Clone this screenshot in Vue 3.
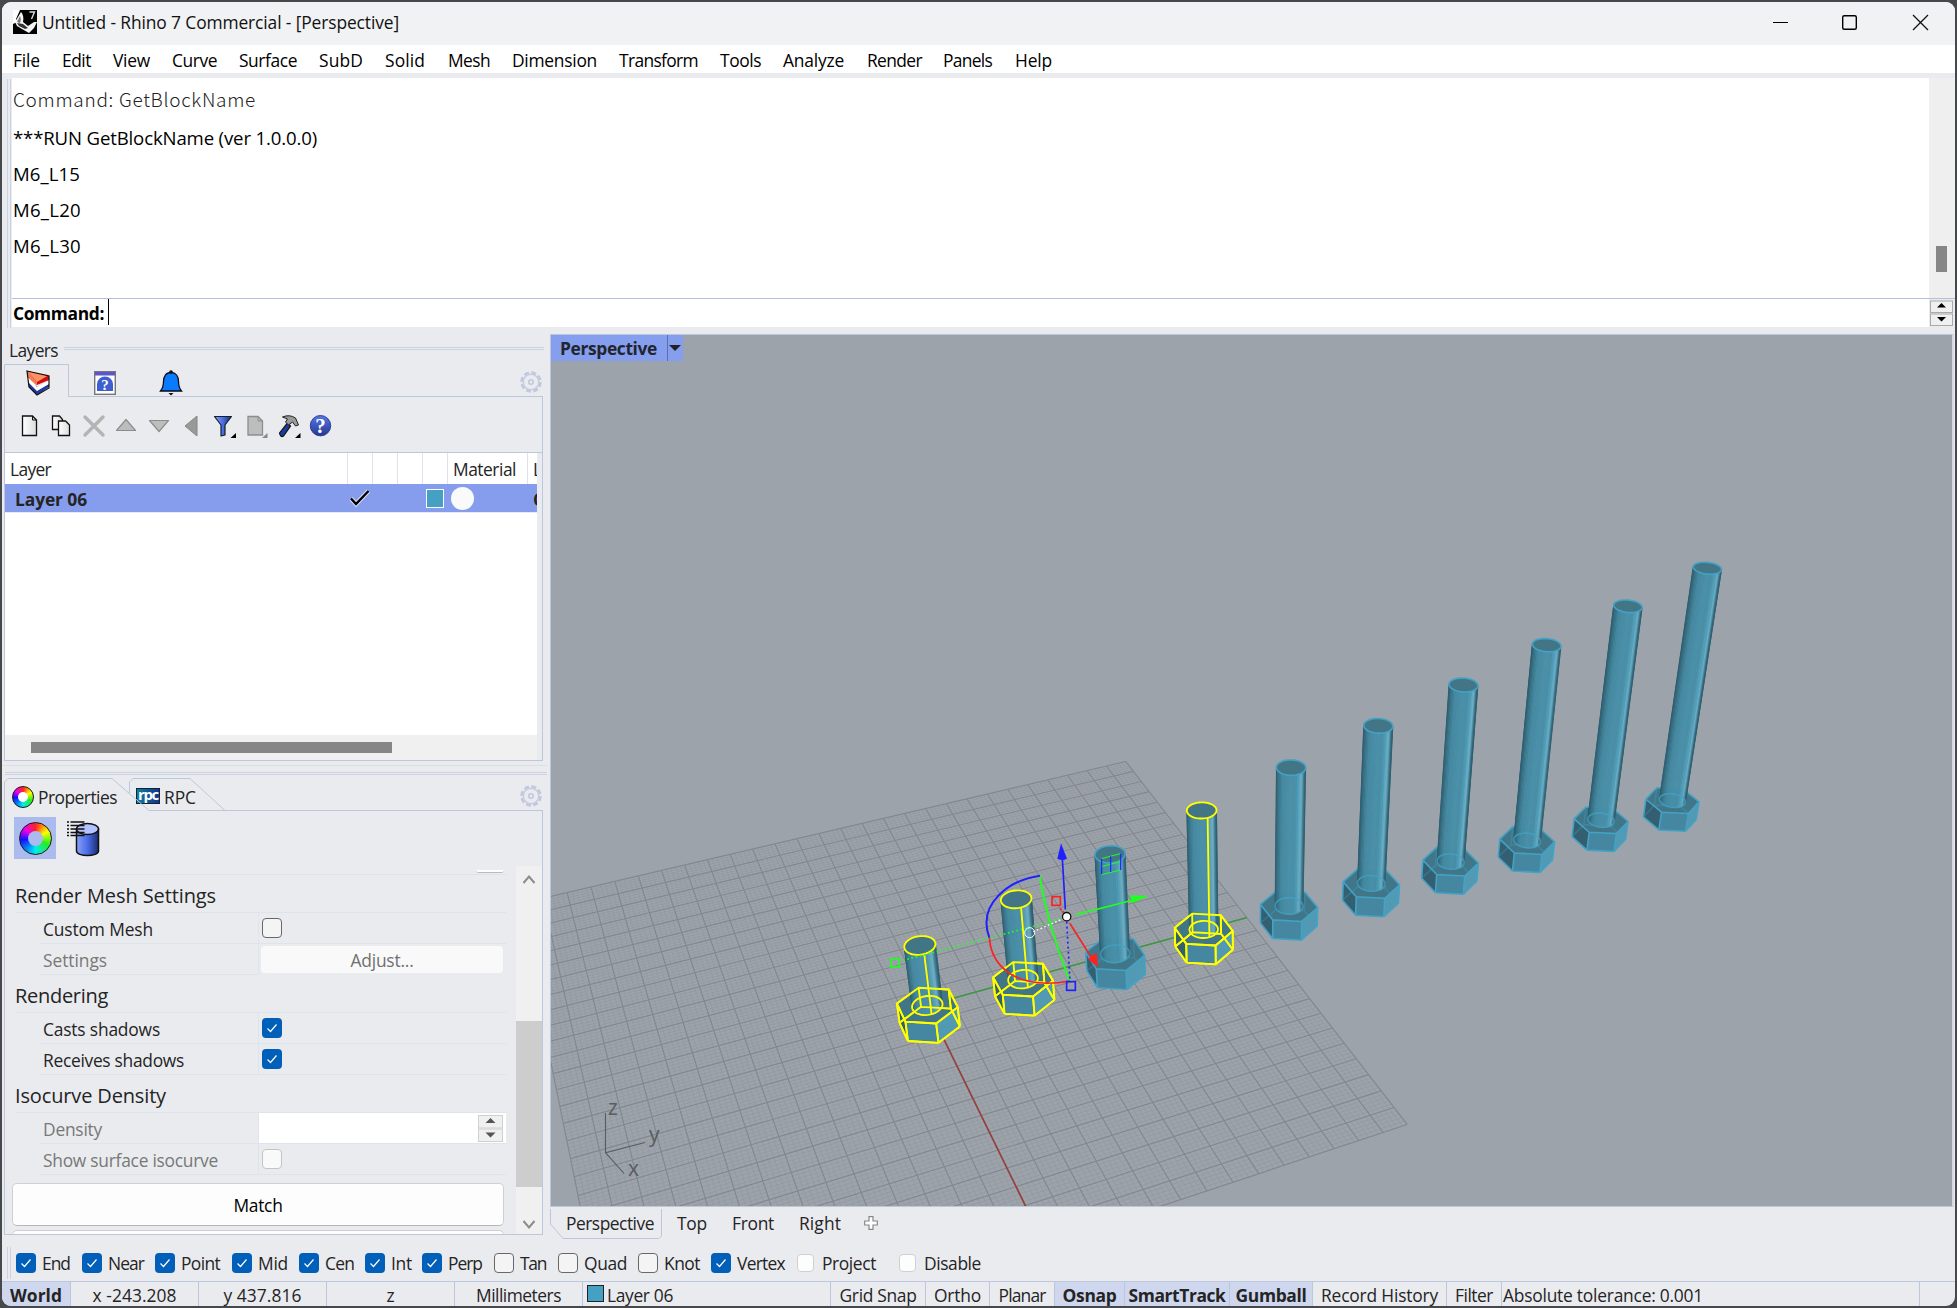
<script setup>
// Stretches or tightens the letter spacing so a label takes the given width in px
const vFit = {
  mounted(el, { value }) {
    const n = el.textContent.length
    const natural = el.getBoundingClientRect().width
    el.style.letterSpacing = (value - natural) / n + 'px'
  },
}

const menus = [
  ['File', 27, 49], ['Edit', 29, 51], ['View', 37, 59], ['Curve', 45, 67], ['Surface', 58, 80],
  ['SubD', 44, 66], ['Solid', 40, 63], ['Mesh', 42, 64], ['Dimension', 85, 107], ['Transform', 79, 101],
  ['Tools', 41, 63], ['Analyze', 61, 84], ['Render', 55, 76], ['Panels', 49, 72], ['Help', 37, 60],
]

const history = [
  ['Command: GetBlockName', 243, 37, true],
  ['***RUN GetBlockName (ver 1.0.0.0)', 304, 36, false],
  ['M6_L15', 67, 36, false],
  ['M6_L20', 68, 36, false],
  ['M6_L30', 68, 36, false],
]

// label, cell width, checkbox state, text width
const snaps = [
  ['End', 66, 'on', 28], ['Near', 73, 'on', 36], ['Point', 77, 'on', 39], ['Mid', 67, 'on', 30],
  ['Cen', 66, 'on', 29], ['Int', 57, 'on', 21], ['Perp', 72, 'on', 34], ['Tan', 64, 'off', 26],
  ['Quad', 80, 'off', 43], ['Knot', 73, 'off', 36], ['Vertex', 86, 'on', 48],
  ['Project', 102, 'dim', 54], ['Disable', 90, 'dim', 57],
]

// label, cell width, text width, kind
const status = [
  ['World', 69, 52, 'active'], ['x -243.208', 128, 84, ''], ['y 437.816', 128, 78, ''], ['z', 128, 8, ''],
  ['Millimeters', 128, 85, ''], ['Layer 06', 248, 66, 'layer'], ['Grid Snap', 95, 77, ''],
  ['Ortho', 64, 47, ''], ['Planar', 65, 47, ''], ['Osnap', 70, 54, 'active'], ['SmartTrack', 105, 97, 'active'],
  ['Gumball', 83, 71, 'active'], ['Record History', 134, 117, ''], ['Filter', 55, 38, ''],
  ['Absolute tolerance: 0.001', 418, 200, 'left'],
]

const views = [['Perspective', 88, 111], ['Top', 30, 55], ['Front', 42, 67], ['Right', 42, 65]]

// World (mm) to screen
function project(x, y, z) {
  const w = 1 - 0.002142 * x + 0.000997 * y - 0.0015 * z
  return [
    (927.3 - 0.5629 * x + 5.807 * y - 1.875 * z) / w,
    (1005.4 + 0.7529 * x - 0.34 * y - 5.42 * z) / w,
  ]
}
const fmt = (p) => p[0].toFixed(2) + ' ' + p[1].toFixed(2)
const seg = (a, b) => 'M' + fmt(project(...a)) + 'L' + fmt(project(...b))
const poly = (pts) => pts.map(fmt).join(' ')

let minor = ''
let major = ''
for (let i = -70; i <= 70; i++) {
  const d = seg([i, -70, 0], [i, 70, 0]) + seg([-70, i, 0], [70, i, 0])
  if (i % 5 === 0) major += d
  else minor += d
}
const axisX = seg([0, 0, 0], [70, 0, 0])
const axisY = seg([0, 0, 0], [0, 70, 0])

// Shank colours from the left silhouette to the right one
const ramp = [
  [0, 44, 92, 110], [0.08, 54, 112, 132], [0.22, 68, 137, 161], [0.5, 73, 144, 169], [0.68, 72, 142, 166],
  [0.8, 92, 163, 187], [0.88, 112, 176, 199], [0.93, 68, 130, 151], [1, 46, 94, 111],
]
function shade(t) {
  for (let i = 1; i < ramp.length; i++) {
    if (t <= ramp[i][0]) {
      const a = ramp[i - 1]
      const b = ramp[i]
      const k = (t - a[0]) / (b[0] - a[0])
      return `rgb(${[1, 2, 3].map((j) => Math.round(a[j] + (b[j] - a[j]) * k)).join(',')})`
    }
  }
  return 'rgb(46,94,111)'
}

function makeBolt(index) {
  const y0 = index * 20
  const len = 15 + index * 5
  const selected = [0, 1, 3].includes(index)
  const circle = (z) => Array.from({ length: 48 }, (_, i) => {
    const a = (i / 48) * Math.PI * 2
    return project(3 * Math.cos(a), y0 + 3 * Math.sin(a), z)
  })
  const hex = (z) => Array.from({ length: 6 }, (_, i) => {
    const a = (i / 6) * Math.PI * 2
    return project(6.15 * Math.cos(a), y0 + 6.15 * Math.sin(a), z)
  })
  const top = circle(len)
  const base = circle(0)
  const hi = hex(0)
  const lo = hex(-4.95)
  const minX = Math.min(...base.map((p) => p[0]))
  const maxX = Math.max(...base.map((p) => p[0]))
  const strips = []
  for (let i = 0; i < 48; i++) {
    const j = (i + 1) % 48
    const ux = base[j][0] - base[i][0]
    const uy = base[j][1] - base[i][1]
    const vx = top[i][0] - base[i][0]
    const vy = top[i][1] - base[i][1]
    if (ux * vy - uy * vx < 0) {
      const t = ((base[i][0] + base[j][0]) / 2 - minX) / (maxX - minX)
      strips.push({ pts: poly([base[i], base[j], top[j], top[i]]), fill: shade(t) })
    }
  }
  const face = (i) => {
    const j = (i + 1) % 6
    return poly([hi[i], hi[j], lo[j], lo[i]])
  }
  let hidden = ''
  let front = 'M' + hi.map(fmt).join('L') + 'Z'
  for (let i = 0; i < 6; i++) {
    const j = (i + 1) % 6
    const under = 'M' + fmt(lo[i]) + 'L' + fmt(lo[j])
    if ([0, 4, 5].includes(i)) front += under
    else hidden += under
    const up = 'M' + fmt(hi[i]) + 'L' + fmt(lo[i])
    if ([0, 1, 4, 5].includes(i)) front += up
    else hidden += up
  }
  return {
    selected, strips, hidden, front,
    cap: poly(hi), left: face(4), mid: face(5), right: face(0),
    top: poly(top), ring: poly(base), seam: 'M' + fmt(base[0]) + 'L' + fmt(top[0]),
  }
}
// Far bolts first
const bolts = Array.from({ length: 10 }, (_, i) => makeBolt(9 - i))
</script>

<template>
  <div class="desk">
    <div class="window">
      <header class="titlebar">
        <svg class="logo" viewBox="0 0 24 24">
          <rect width="24" height="24" fill="#000" />
          <path d="M0 0h7l-4 9 1 3-4 2z" fill="#fff" />
          <path d="M8 2c2 2 3 6 2 10l5 4 6-4 3 0-3 6-5 5-7-4-5-3-2-4 3-5z" fill="#f4f4f4" />
          <path d="M4 13l6 1 5 4-3 1-6-3z" fill="#333" />
          <path d="M7 6c1 3 1 5 0 7l-3-1z" fill="#777" />
          <path d="M16.500 2h5l-3 7" fill="none" stroke="#ddd" stroke-width="1.400" />
        </svg>
        <span v-fit="357" class="caption">Untitled - Rhino 7 Commercial - [Perspective]</span>
        <svg class="winbtns" viewBox="0 0 160 20">
          <path d="M1 9.500h15" stroke="#000" stroke-width="1.200" />
          <rect x="70.700" y="2.700" width="13.600" height="13.600" rx="1.500" fill="none" stroke="#000" stroke-width="1.400" />
          <path d="M141 2l15 15M156 2l-15 15" stroke="#111" stroke-width="1.300" />
        </svg>
      </header>

      <nav class="menubar">
        <span v-for="m in menus" :key="m[0]" class="menu" :style="{ width: m[2] + 'px' }"><span v-fit="m[1]">{{ m[0] }}</span></span>
      </nav>

      <section class="command">
        <div class="grip"></div>
        <div class="console">
          <div class="history">
            <div v-for="h in history" :key="h[0]" class="line" :class="{ thin: h[3] }" :style="{ height: h[2] + 'px' }"><span v-fit="h[1]">{{ h[0] }}</span></div>
          </div>
          <div class="prompt"><b v-fit="91">Command:</b><i class="caret"></i></div>
        </div>
        <div class="side">
          <div class="vscroll"><div class="vthumb"></div></div>
          <div class="spin">
            <svg viewBox="0 0 23 26">
              <rect x="0.500" y="1" width="22" height="11.500" fill="#f0f0f0" stroke="#aaa" />
              <rect x="0.500" y="14" width="22" height="11.500" fill="#f0f0f0" stroke="#aaa" />
              <path d="M7 7.500h9l-4.500-4.500zM7 17h9l-4.500 4.500z" fill="#000" />
            </svg>
          </div>
        </div>
      </section>

      <main class="work">
        <aside class="left">
          <div class="ptitle"><span v-fit="49">Layers</span><div class="dbl"></div></div>
          <div class="tabs">
            <svg class="tabline" viewBox="0 0 548 36">
              <path d="M2.500 36V.500H66.500V32.500H541" fill="none" stroke="#bcc7dd" />
            </svg>
            <svg class="ticon a" viewBox="0 0 24 26">
              <path d="M1 1L12 13V25L3 17Z" fill="#fff" /><path d="M12 17L23 12V17L11 25L3 17L2 12Z" fill="#203a9c" />
              <path d="M1.500 8L11 17L23 11V14L11 21L2 12Z" fill="#fff" />
              <path d="M1 1L23 6V10L11 15L1 6Z" fill="#d40c0c" /><path d="M1 1L23 5L11 12Z" fill="#ff9166" /><path d="M1 1L11 12V16L1.500 7Z" fill="#f47f57" />
              <path d="M1 1L23 6V18L11 25L3 17Z" fill="none" stroke="#111" stroke-width="1.200" />
            </svg>
            <svg class="ticon b" viewBox="0 0 22 24">
              <rect x=".7" y=".7" width="20.600" height="22.600" fill="#fff" stroke="#777" stroke-width="1.400" />
              <rect x="1" y="1" width="20" height="3.500" fill="#5d55c8" />
              <path d="M3 20V13a8 7.500 0 0 1 16 0v7z" fill="#3f5fd0" />
              <text x="11" y="19" text-anchor="middle" class="q">?</text>
            </svg>
            <svg class="ticon c" viewBox="0 0 24 26">
              <path d="M12 2.500c5 0 7.500 4 7.500 9 0 5 1 7 3 9.500h-21c2-2.500 3-4.500 3-9.500 0-5 2.500-9 7.500-9z" fill="#0a7bff" stroke="#0b0b1a" stroke-width="1.300" />
              <circle cx="12" cy="2" r="1.800" fill="#111" /><path d="M9.500 23h5l-2.500 2.500z" fill="#111" />
            </svg>
            <svg class="gear" viewBox="-12 -12 24 24"><circle r="9.500" fill="none" stroke="#bfc8dc" stroke-width="2.500" stroke-dasharray="5 2.460" /><circle r="7.800" fill="none" stroke="#c3cce0" stroke-width="1.500" /><circle r="2.300" fill="none" stroke="#bfc8dc" stroke-width="1.500" /></svg>
          </div>
          <div class="box layers">
            <div class="toolbar">
              <svg viewBox="0 0 330 26">
                <defs>
                  <linearGradient id="pg" x1="0" x2="1"><stop offset="0" stop-color="#fff" /><stop offset="1" stop-color="#dcdcdc" /></linearGradient>
                  <linearGradient id="bl" x1="0" x2="1"><stop offset="0" stop-color="#8aa2f5" /><stop offset=".5" stop-color="#4a6ce8" /><stop offset="1" stop-color="#1a2b70" /></linearGradient>
                  <linearGradient id="bq" x1="0" x2="0" y1="0" y2="1"><stop offset="0" stop-color="#5577e8" /><stop offset="1" stop-color="#26388f" /></linearGradient>
                </defs>
                <path d="M7.500 3h10l4 4v15.500h-14z" fill="url(#pg)" stroke="#111" stroke-width="1.300" /><path d="M17.500 3v4h4" fill="none" stroke="#111" />
                <path d="M37.500 3h7l3 3.500v10h-10z" fill="url(#pg)" stroke="#111" stroke-width="1.300" />
                <path d="M43.500 8h7l4 4v10.500h-11z" fill="url(#pg)" stroke="#111" stroke-width="1.300" />
                <path d="M70 4l18 18M88 4l-18 18" stroke="#b4b4b4" stroke-width="3.400" stroke-linecap="round" />
                <g transform="translate(-9.500 0)">
                  <path d="M111 17.500h19l-9.500-11z" fill="#bdbdbd" stroke="#8d8d8d" stroke-width="1.200" stroke-linejoin="round" />
                  <path d="M144 7.500h19l-9.500 11z" fill="#bdbdbd" stroke="#8d8d8d" stroke-width="1.200" stroke-linejoin="round" />
                  <path d="M191.500 3v20l-12-10z" fill="#999" stroke="#858585" stroke-linejoin="round" />
                  <path d="M209 3.500h17l-6.500 8.500v10l-4 1v-11z" fill="url(#bl)" stroke="#122" stroke-width="1.200" stroke-linejoin="round" />
                  <path d="M230.500 20v5h-5.500z" fill="#000" />
                  <path d="M242.500 3.500h10l4.500 4.500v14h-14.500z" fill="#bdbdbd" stroke="#8d8d8d" stroke-width="1.300" /><path d="M252.500 3.500v4.500h4.500" fill="none" stroke="#8d8d8d" />
                  <path d="M262 20v5h-5.500z" fill="#888" />
                  <path d="M274 20l8-10 3 3-7 10q-3 2-4-3z" fill="#1c3c9c" stroke="#111" stroke-width="1.200" />
                  <path d="M277 4q7-3 13 1l3 7-3 1-3-4-4 3-3-3 2-3z" fill="#9a9a9a" stroke="#222" />
                  <path d="M295 20v5h-5.500z" fill="#000" />
                  <circle cx="315" cy="12.700" r="10.200" fill="url(#bq)" stroke="#2b3f96" />
                  <text x="315" y="20" text-anchor="middle" class="qb">?</text>
                </g>
              </svg>
            </div>
            <div class="table">
              <div class="thead">
                <div class="th name"><span v-fit="41">Layer</span></div>
                <div class="th s"></div><div class="th s"></div><div class="th s"></div><div class="th s"></div>
                <div class="th mat"><span v-fit="63">Material</span></div>
                <div class="th last">L</div>
              </div>
              <div class="row">
                <b class="rname"><span v-fit="72">Layer 06</span></b>
                <svg class="check" viewBox="0 0 24 20"><path d="M3 10.500l5 5.500L20.500 3" fill="none" stroke="#fff" stroke-width="4.500" opacity=".7" /><path d="M3 10.500l5 5.500L20.500 3" fill="none" stroke="#000" stroke-width="2.500" /></svg>
                <div class="sw"></div><div class="dot"></div><b class="rlast">C</b>
              </div>
            </div>
            <div class="hscroll"><div class="hthumb"></div></div>
          </div>

          <div class="split"></div>
          <div class="tabs second">
            <svg class="tabline" viewBox="0 0 548 36">
              <path d="M2.500 36V4L6 .500H110L147 32.500H541" fill="none" stroke="#bcc7dd" />
              <path d="M127.500 15.500V4L131 .500H188L223 32.500" fill="none" stroke="#bcc7dd" />
            </svg>
            <div class="ptabs">
              <div class="wheel small"></div><span v-fit="79">Properties</span>
              <div class="rpc"><span v-fit="20">rpc</span></div><span v-fit="32">RPC</span>
            </div>
            <svg class="gear" viewBox="-12 -12 24 24"><circle r="9.500" fill="none" stroke="#bfc8dc" stroke-width="2.500" stroke-dasharray="5 2.460" /><circle r="7.800" fill="none" stroke="#c3cce0" stroke-width="1.500" /><circle r="2.300" fill="none" stroke="#bfc8dc" stroke-width="1.500" /></svg>
          </div>
          <div class="box props">
            <div class="picons">
              <div class="psel"><div class="wheel big"></div></div>
              <svg viewBox="0 0 36 38">
                <path d="M10.500 9v22c0 6 22 6 22 0V9z" fill="url(#bl)" stroke="#111" stroke-width="1.500" />
                <ellipse cx="21.500" cy="9" rx="11" ry="5.500" fill="#b3c3ff" stroke="#111" stroke-width="1.500" />
                <path d="M1 2h2M4.500 2h14M1 5.500h2M4.500 5.500h14M1 9h2M4.500 9h14M1 12.500h2M4.500 12.500h14M1 15.500h2M4.500 15.500h14" stroke="#111" stroke-width="1.500" />
              </svg>
            </div>
            <div class="pbody">
              <div class="plist">
                <div class="cut"><div class="stub"></div></div>
                <div class="ghead"><span v-fit="201">Render Mesh Settings</span></div>
                <div class="prow"><div class="pl"><span v-fit="110">Custom Mesh</span></div><div class="pr"><i class="cb"></i></div></div>
                <div class="prow noline"><div class="pl dim"><span v-fit="64">Settings</span></div><div class="pr"><div class="adjust"><span v-fit="63">Adjust...</span></div></div></div>
                <div class="ghead"><span v-fit="93">Rendering</span></div>
                <div class="prow"><div class="pl"><span v-fit="117">Casts shadows</span></div><div class="pr"><i class="cb on"><svg viewBox="0 0 20 20"><path d="M5.500 10.500l3 3 6-7" /></svg></i></div></div>
                <div class="prow"><div class="pl"><span v-fit="141">Receives shadows</span></div><div class="pr"><i class="cb on"><svg viewBox="0 0 20 20"><path d="M5.500 10.500l3 3 6-7" /></svg></i></div></div>
                <div class="ghead"><span v-fit="151">Isocurve Density</span></div>
                <div class="prow"><div class="pl dim"><span v-fit="59">Density</span></div><div class="pr field">
                  <svg viewBox="0 0 25 27"><rect x=".5" y=".5" width="24" height="12.500" fill="#f0f0f0" stroke="#d0d0d0" /><rect x=".5" y="14" width="24" height="12.500" fill="#f0f0f0" stroke="#d0d0d0" /><path d="M7.500 8h10l-5-5zM7.500 17.500h10l-5 5z" fill="#555" /></svg>
                </div></div>
                <div class="prow"><div class="pl dim"><span v-fit="175">Show surface isocurve</span></div><div class="pr"><i class="cb dis"></i></div></div>
                <div class="match"><span v-fit="49">Match</span></div>
                <div class="match next"></div>
              </div>
              <div class="pscroll">
                <svg viewBox="0 0 26 30"><path d="M7.500 18l5.500-6.500 5.500 6.500" fill="none" stroke="#8b8b8b" stroke-width="2" /></svg>
                <div class="pthumb"></div>
                <svg class="dn" viewBox="0 0 26 30"><path d="M7.500 12l5.500 6.500 5.500-6.500" fill="none" stroke="#8b8b8b" stroke-width="2" /></svg>
              </div>
            </div>
          </div>
        </aside>

        <section class="right">
          <div class="viewport">
            <svg class="scene" viewBox="551 335 1402 871" width="1402" height="871">
              <path :d="minor" fill="none" stroke="#8f959c" stroke-width=".7" opacity=".75" />
              <path :d="major" fill="none" stroke="#83878f" stroke-width="1.150" />
              <path :d="axisX" stroke="#96413f" stroke-width="1.700" />
              <path :d="axisY" stroke="#46964a" stroke-width="1.700" />
              <g v-for="(b, i) in bolts" :key="i" :class="b.selected ? 'sel' : 'plain'" stroke-linejoin="round">
                <polygon :points="b.left" fill="#335f70" />
                <polygon :points="b.right" fill="#529ab4" />
                <polygon :points="b.mid" fill="#4587a0" />
                <polygon :points="b.cap" fill="#407688" />
                <path class="edge back" :d="b.hidden" />
                <path class="edge" :d="b.front" />
                <polygon v-for="(s, k) in b.strips" :key="k" :points="s.pts" :fill="s.fill" :stroke="s.fill" stroke-width=".6" />
                <polygon class="edge base" :points="b.ring" />
                <path v-if="b.selected" class="edge" :d="b.hidden" />
                <path v-if="b.selected" class="edge" :d="b.front" />
                <path class="edge seam" :d="b.seam" />
                <polygon class="edge top" :points="b.top" />
              </g>
              <g transform="translate(860 780) scale(.33333)" fill="none" stroke-width="5">
                <path d="M724 236L781 221M724 260L781 245M724 284L781 270" stroke="#20ff20" stroke-width="3" />
                <path d="M725 236V283M752 229V276M782 221V270" stroke="#2020ff" stroke-width="3.500" />
                <path d="M612 415L122 543" stroke="#20ff20" stroke-dasharray="5 8" />
                <path d="M540 287C545 350 590 510 630 603" stroke="#20ff20" stroke-width="6" />
                <path d="M540 287C450 300 350 370 388 473" stroke="#2020ff" stroke-width="6" />
                <path d="M388 473C394 560 470 632 630 603" stroke="#ff2020" />
                <path d="M612 415L520 455" stroke="#fff" stroke-width="4" stroke-dasharray="5 7" />
                <path d="M620 425L630 603" stroke="#2020ff" stroke-dasharray="6 9" />
                <path d="M612 398L600 385" stroke="#ff2020" stroke-dasharray="6 5" />
                <path d="M616 388L607 235" stroke="#2020ff" /><path d="M603 190L592 236Q607 244 621 236Z" fill="#2020ff" stroke="none" />
                <path d="M648 404L820 360" stroke="#20ff20" /><path d="M865 348L810 346L816 370Z" fill="#20ff20" stroke="none" />
                <path d="M630 430L702 545" stroke="#ff2020" /><path d="M714 562L684 538Q696 524 710 520Z" fill="#ff2020" stroke="none" />
                <rect x="576" y="350" width="25" height="26" stroke="#ff2020" />
                <rect x="92" y="536" width="26" height="25" stroke="#20ff20" />
                <rect x="620" y="605" width="26" height="26" stroke="#2020ff" />
                <circle cx="509" cy="458" r="15" stroke="#fff" stroke-width="3" />
                <circle cx="620" cy="410" r="12.500" fill="#fff" stroke="#111" stroke-width="4" />
              </g>
              <g stroke="#595c60" fill="none" stroke-width="1.100"><path d="M605.500 1113V1152.700L645 1142.500M605.500 1152.700L624 1173.500" /></g>
              <g class="axes"><text x="608" y="1115">z</text><text x="649" y="1142">y</text><text x="628" y="1176">x</text></g>
            </svg>
            <div class="vtitle"><b v-fit="97">Perspective</b><i></i></div>
          </div>
          <div class="vtabs">
            <svg class="vline" viewBox="0 0 120 36"><path d="M.5 2V17L13 31.500H109L111.500 29V2" fill="none" stroke="#bcc7dd" /></svg>
            <span v-for="v in views" :key="v[0]" class="vt" :style="{ width: v[2] + 'px' }"><span v-fit="v[1]">{{ v[0] }}</span></span>
            <svg class="plus" viewBox="0 0 14 14"><path d="M5 .7h4V5h4.300v4H9v4.300H5V9H.7V5H5z" fill="#fff" stroke="#888" stroke-width="1.200" /></svg>
          </div>
        </section>
      </main>

      <section class="osnap">
        <div class="grip low"></div>
        <div v-for="s in snaps" :key="s[0]" class="snap" :class="s[2]" :style="{ width: s[1] + 'px' }">
          <i class="cb" :class="s[2]"><svg v-if="s[2] === 'on'" viewBox="0 0 20 20"><path d="M5.500 10.500l3 3 6-7" /></svg></i>
          <span v-fit="s[3]">{{ s[0] }}</span>
        </div>
      </section>

      <footer class="status">
        <div v-for="s in status" :key="s[0]" class="cell" :class="s[3]" :style="{ width: s[1] + 'px' }">
          <i v-if="s[3] === 'layer'" class="lsw"></i><span v-fit="s[2]">{{ s[0] }}</span>
        </div>
      </footer>
    </div>
  </div>
</template>

<style>
body { margin: 0; background: #444547; overflow: hidden; }
</style>

<style scoped>
* { box-sizing: border-box; }
.desk { width: 1957px; height: 1308px; padding: 2px; background: #47484b; font: 17.4px/24px "Open Sans", "Noto Sans", sans-serif; color: #242424; }
.desk span, .desk b { white-space: nowrap; }
.window { width: 1953px; height: 1304px; background: #eaebef; border-radius: 9px; overflow: hidden; display: flex; flex-direction: column; }
svg { display: block; }

.titlebar { height: 43px; flex: none; background: #f1f2f4; display: flex; align-items: center; padding-left: 11px; color: #111; }
.logo { width: 24px; height: 24px; margin-right: 5px; margin-top: -3px; }
.caption { margin-top: -3px; }
.winbtns { width: 160px; height: 20px; margin-left: auto; margin-right: 23px; margin-top: -1px; }
.menubar { height: 28px; flex: none; background: #fff; display: flex; align-items: center; padding-left: 11px; color: #000; }
.menu { flex: none; padding-top: 1px; }

.command { height: 254px; flex: none; display: flex; padding-top: 5px; }
.grip { width: 4px; margin: 1px 1px 0 5px; border: 1px solid #cbd3e2; border-width: 0 1px; height: 249px; flex: none; }
.console { width: 1918px; margin-right: 0; display: flex; flex-direction: column; }
.history { height: 220px; background: #fff; padding: 5px 0 0 1px; font-size: 18.600px; color: #000; }
.line { display: flex; align-items: center; }
.thin { font-family: "Noto Sans CJK KR", "Noto Sans", sans-serif; font-weight: 300; color: #222; padding-bottom: 5px; font-size: 19px; }
.prompt { height: 29px; border-top: 1px solid #b4c0d6; background: #fff; display: flex; align-items: center; padding: 0 0 1px 1px; color: #000; }
.caret { width: 1px; height: 26px; background: #000; margin: -1px 0 0 4px; }
.side { width: 26px; }
.vscroll { height: 220px; background: #efefef; padding: 168px 0 0 7px; border-left: 0; }
.vthumb { width: 11px; height: 26px; background: #868686; }
.spin { height: 29px; border-top: 1px solid #b4c0d6; padding: 1px; }
.spin svg { width: 23px; height: 26px; }

.work { height: 908px; flex: none; display: flex; }
.left { width: 548px; flex: none; display: flex; flex-direction: column; }
.ptitle { height: 37px; display: flex; align-items: center; padding: 8px 6px 0 7px; gap: 6px; }
.dbl { flex: 1; height: 3px; border: 1px solid #cbd3e2; border-width: 1px 0; margin-top: -3px; }
.tabs { height: 33px; position: relative; display: flex; align-items: center; padding-left: 24px; flex: none; }
.tabline { position: absolute; left: 0; top: 0; width: 548px; height: 36px; z-index: 1; }
.ticon { flex: none; margin-top: 4px; }
.a { width: 24px; height: 26px; }
.b { width: 22px; height: 24px; margin-left: 44px; }
.c { width: 24px; height: 26px; margin-left: 43px; }
.gear { width: 24px; height: 24px; margin-left: auto; margin-right: 7px; margin-top: 2px; }
.q { font: bold 15px "Liberation Serif", serif; fill: #fff; }
.qb { font: bold 21px "Liberation Serif", serif; fill: #fff; }
.box { margin-left: 2px; width: 539px; border: 1px solid #bcc7dd; border-top: 0; flex: none; }
.layers { height: 364px; }
.toolbar { height: 56px; padding: 16px 0 0 10px; border-bottom: 1px solid #bcc7dd; }
.toolbar svg { width: 330px; height: 26px; }
.table { width: 532px; height: 282px; background: #fff; overflow: hidden; }
.thead { height: 31px; display: flex; align-items: stretch; }
.th { flex: none; border-right: 1px solid #dfe2ea; display: flex; align-items: center; padding-top: 1px; }
.name { width: 343px; padding-left: 5px; }
.s { width: 25px; }
.mat { width: 80px; padding-left: 5px; }
.last { width: 10px; padding-left: 5px; overflow: hidden; border: 0; }
.row { height: 29px; background: #869ced; display: flex; align-items: center; border-bottom: 1px solid #e8ebf3; overflow: hidden; }
.rname { width: 343px; padding: 2px 0 0 10px; flex: none; }
.check { width: 24px; height: 20px; flex: none; }
.sw { width: 18px; height: 19px; margin-left: 54px; border: 1px solid #fff; background: #45a1c4; flex: none; }
.dot { width: 23px; height: 23px; border-radius: 50%; background: #fafafa; margin-left: 7px; flex: none; }
.rlast { margin-left: 59px; width: 5px; overflow: hidden; padding-top: 1px; flex: none; }
.hscroll { height: 25px; width: 532px; background: #f0f0f0; padding: 7px 0 0 26px; }
.hthumb { width: 361px; height: 11px; background: #868686; }

.split { height: 17px; flex: none; margin: 0 3px 0 0; border-bottom: 0; background: linear-gradient(#dcdee6, #dcdee6) 0 4px / 100% 1px no-repeat, linear-gradient(#cbd3e2, #cbd3e2) 3px 11px / 100% 1px no-repeat, linear-gradient(#cbd3e2, #cbd3e2) 3px 13px / 100% 1px no-repeat; }
.second { padding-left: 10px; }
.ptabs { display: flex; align-items: center; padding-top: 5px; }
.wheel { border-radius: 50%; border: 1.500px solid #181818; background: conic-gradient(#f22, #ff0 60deg, #2e2 115deg, #0ee 180deg, #11f 265deg, #e0e 310deg, #f22); display: flex; align-items: center; justify-content: center; flex: none; }
.wheel::after { content: ""; border-radius: 50%; }
.small { width: 22px; height: 22px; margin-right: 4px; }
.small::after { width: 10px; height: 10px; background: #fff; }
.big { width: 33px; height: 33px; }
.big::after { width: 15px; height: 15px; background: #abbbee; }
.rpc { width: 24px; height: 16px; margin: -2px 4px 0 19px; border: 1px solid #123; background: linear-gradient(90deg, #0f7f9d, #11358c); color: #fff; font-weight: bold; font-size: 15px; line-height: 10px; padding-left: 1px; }
.props { height: 424px; display: flex; flex-direction: column; }
.picons { height: 55px; display: flex; padding: 6px 0 0 9px; flex: none; }
.psel { width: 42px; height: 42px; background: #abbbee; display: flex; align-items: center; justify-content: center; padding-top: 1px; }
.picons svg { width: 36px; height: 38px; margin: 3px 0 0 10px; }
.pbody { flex: 1; display: flex; min-height: 0; }
.plist { width: 511px; padding: 4px 10px 0 10px; overflow: hidden; }
.cut { height: 5px; margin-left: 24px; border-bottom: 1px solid #dfe4ec; display: flex; justify-content: flex-end; padding-right: 2px; }
.stub { width: 28px; height: 3px; background: #fdfdfd; border-bottom: 1px solid #bbb; border-radius: 0 0 4px 4px; }
.ghead { height: 38px; border-bottom: 1px solid #dfe4ec; font-size: 20px; display: flex; align-items: center; padding: 4px 0 0 0; }
.prow { height: 31px; margin-left: 24px; display: flex; border-bottom: 1px solid #dfe4ec; }
.noline { border-bottom-color: transparent; }
.noline .pl { height: 31px; border-bottom: 1px solid #dfe4ec; }
.pl { width: 220px; flex: none; padding-left: 4px; border-right: 1px solid #dfe4ec; display: flex; align-items: center; padding-top: 2px; }
.dim { color: #787878; }
.pr { flex: 1; padding: 5px 0 0 3px; }
.field { background: #fff; display: flex; justify-content: flex-end; padding: 2px 3px 0 0; }
.field svg { width: 25px; height: 27px; }
.cb { display: block; width: 20px; height: 20px; border: 1.500px solid #686868; border-radius: 4px; background: #f4f4f4; flex: none; }
.cb.on { border: 0; background: #005fb8; }
.cb svg { width: 20px; height: 20px; }
.cb path { fill: none; stroke: #fff; stroke-width: 1.200; }
.cb.dis { border-color: #c4c4c4; background: #f9f9f9; }
.adjust { width: 242px; height: 27px; margin: -3px 0 0 -1px; background: #f9f9f9; border-radius: 4px; display: flex; align-items: center; justify-content: center; color: #707070; padding-top: 1px; }
.match { height: 43px; margin: 8px 2px 0 -3px; border: 1px solid #d0d0d0; border-bottom-color: #b5b5b5; border-radius: 5px; background: #fdfdfd; display: flex; align-items: center; justify-content: center; color: #000; }
.next { margin-top: 4px; }
.pscroll { width: 26px; background: #f0f0f0; display: flex; flex-direction: column; }
.pscroll svg { width: 26px; height: 30px; flex: none; margin-top: -1px; }
.pthumb { height: 166px; flex: none; margin-top: 126px; background: #cdcdcd; }
.pscroll .dn { margin-top: 22px; }

.right { width: 1405px; }
.viewport { position: relative; margin-top: 7px; margin-right: 1px; height: 873px; border: 1px solid #bcc7dd; border-right: 2px solid #d5dae4; background: #9da3aa; }
.scene { width: 1402px; height: 871px; }
.vtitle { position: absolute; left: 0; top: 0; width: 132px; height: 26px; background: #869eee; display: flex; align-items: center; padding-left: 9px; color: #22252e; }
.vtitle i { border: 6px solid transparent; border-top: 6px solid #222; border-bottom: 0; margin-left: 12px; position: relative; }
.vtitle i::before { content: ""; position: absolute; left: -8px; top: -16px; width: 1px; height: 26px; background: #5c6cae; }
.axes { font: 21px "Open Sans", sans-serif; fill: #595c60; }
.edge { fill: none; stroke: #43a2c5; stroke-width: 1.600; }
.back { opacity: .3; }
.base { opacity: .75; }
.seam { opacity: .6; stroke-width: 1.300; }
.top { fill: #427687; }
.sel .edge { stroke: #ff0; opacity: 1; stroke-width: 1.850; }
.vtabs { height: 28px; position: relative; display: flex; align-items: center; padding: 4px 0 0 16px; }
.vline { position: absolute; left: 0; top: 0; width: 120px; height: 36px; z-index: 1; }
.vt { flex: none; }
.plus { width: 14px; height: 14px; }

.osnap { height: 46px; flex: none; display: flex; align-items: center; padding-top: 10px; }
.low { height: 32px; margin: -1px 5px 0 5px; }
.snap { display: flex; align-items: center; gap: 6px; flex: none; padding-bottom: 0; }
.snap.dim { color: #242424; gap: 8px; }
.cb.dim { width: 17px; height: 18px; border: 1px solid #d0d0d0; background: #fdfdfd; }

.status { height: 25px; flex: none; border-top: 1px solid #bcc7dd; display: flex; }
.cell { flex: none; border-right: 1px solid #bcc7dd; display: flex; align-items: center; justify-content: center; padding-top: 1px; }
.active { background: #ced7ed; font-weight: bold; }
.layer { justify-content: flex-start; padding-left: 4px; }
.lsw { width: 17px; height: 17px; border: 1.500px solid #222; background: #45a1c4; margin: -2px 3px 0 0; }
.left.cell { justify-content: flex-start; flex-direction: row; padding-left: 1px; }
</style>
